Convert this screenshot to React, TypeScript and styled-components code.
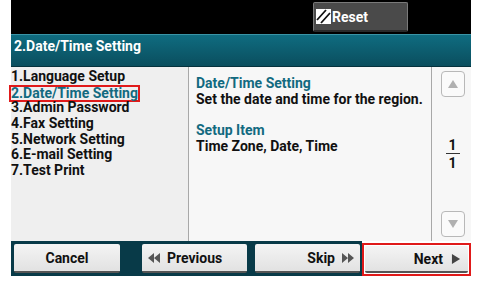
import React from "react";
import styled, { createGlobalStyle } from "styled-components";

const GlobalStyle = createGlobalStyle`
  body {
    margin: 0;
    background: #ffffff;
    font-family: Roboto, "Liberation Sans", sans-serif;
  }
`;

const menuItems = [
  "1.Language Setup",
  "2.Date/Time Setting",
  "3.Admin Password",
  "4.Fax Setting",
  "5.Network Setting",
  "6.E-mail Setting",
  "7.Test Print",
];

export default function App() {
  return (
    <>
      <GlobalStyle />
      <Screen>
        <TopBar>
          <ResetButton>
            <ResetIcon viewBox="0 0 15 15">
              <rect x="0" y="0" width="15" height="15" fill="#fff" />
              <path d="M1 11 L10 1 M5 14 L14 4" stroke="#111" strokeWidth="1.8" />
            </ResetIcon>
            Reset
          </ResetButton>
        </TopBar>
        <Header>2.Date/Time Setting</Header>
        <Content>
          <MenuList>
            {menuItems.map((item, i) => (
              <MenuItem key={item} $active={i === 1}>
                {item}
              </MenuItem>
            ))}
          </MenuList>
          <Detail>
            <Heading>Date/Time Setting</Heading>
            <Body>Set the date and time for the region.</Body>
            <Heading $gap>Setup Item</Heading>
            <Body>Time Zone, Date, Time</Body>
          </Detail>
          <Scroller>
            <ScrollButton>
              <Arrow viewBox="0 0 10 8">
                <path d="M5 0 L10 8 L0 8 Z" fill="#b0b0b0" />
              </Arrow>
            </ScrollButton>
            <Pages>
              <span>1</span>
              <PageLine />
              <span>1</span>
            </Pages>
            <ScrollButton>
              <Arrow viewBox="0 0 10 8">
                <path d="M0 0 L10 0 L5 8 Z" fill="#b0b0b0" />
              </Arrow>
            </ScrollButton>
          </Scroller>
        </Content>
        <BottomBar>
          <NavButton $width={106} $align="center">
            Cancel
          </NavButton>
          <NavButton $width={105} $align="flex-start" $gapLeft={22}>
            <Tri viewBox="0 0 12 10">
              <path d="M6 0 L0 5 L6 10 Z M12 0 L6 5 L12 10 Z" fill="#555" />
            </Tri>
            Previous
          </NavButton>
          <NavButton $width={105} $align="flex-end" $gapLeft={8}>
            Skip
            <Tri viewBox="0 0 12 10">
              <path d="M0 0 L6 5 L0 10 Z M6 0 L12 5 L6 10 Z" fill="#555" />
            </Tri>
          </NavButton>
          <NextFrame>
            <NavButton $width={105} $align="flex-end" $full>
              Next
              <Tri viewBox="0 0 9 11">
                <path d="M0 0 L9 5.5 L0 11 Z" fill="#444" />
              </Tri>
            </NavButton>
          </NextFrame>
        </BottomBar>
      </Screen>
    </>
  );
}

const Screen = styled.div`
  width: 460px;
  margin-left: 11px;
  display: flex;
  flex-direction: column;
`;

const TopBar = styled.div`
  height: 34px;
  background: #000;
  display: flex;
  justify-content: flex-end;
  align-items: flex-start;
  padding-right: 63px;
  box-sizing: border-box;
`;

const ResetButton = styled.div`
  margin-top: 2px;
  width: 95px;
  height: 30px;
  box-sizing: border-box;
  background: #4a4a4a;
  border: 1px solid #7a7a7a;
  border-bottom: 2px solid #2a2a2a;
  border-radius: 2px;
  display: flex;
  align-items: center;
  padding-left: 2px;
  gap: 1px;
  color: #fff;
  font-weight: 700;
  font-size: 14px;
`;

const ResetIcon = styled.svg`
  width: 15px;
  height: 15px;
`;

const Header = styled.div`
  height: 33px;
  box-sizing: border-box;
  background: linear-gradient(#0f6c80, #0a4e5e);
  border-top: 1px solid #3a94a6;
  border-bottom: 1px solid #05323d;
  color: #fff;
  font-weight: 700;
  font-size: 14px;
  padding: 3px 0 0 3px;
`;

const Content = styled.div`
  height: 174px;
  display: flex;
`;

const MenuList = styled.div`
  width: 178px;
  background: #efefef;
  border-right: 1px solid #a8a8a8;
  padding-top: 2px;
  box-sizing: border-box;
`;

const MenuItem = styled.div<{ $active?: boolean }>`
  font-size: 14px;
  font-weight: 700;
  line-height: 15.7px;
  height: 15.7px;
  color: ${({ $active }) => ($active ? "#126a80" : "#111")};
  width: fit-content;
  margin-left: ${({ $active }) => ($active ? "-2px" : "0")};
  padding: 0 ${({ $active }) => ($active ? "2px" : "0")};
  box-shadow: ${({ $active }) => ($active ? "0 0 0 2px #e01a1a inset" : "none")};
  ${({ $active }) => ($active ? "padding-top: 1px; height: 17px; margin: 0 0 -1.3px -2px; box-sizing: border-box; line-height: 15px;" : "")}
`;

const Detail = styled.div`
  width: 243px;
  background: #f7f7f7;
  border-right: 1px solid #a8a8a8;
  box-sizing: border-box;
  padding: 8px 0 0 7px;
`;

const Heading = styled.div<{ $gap?: boolean }>`
  color: #126a80;
  font-size: 14px;
  font-weight: 700;
  line-height: 16px;
  margin-top: ${({ $gap }) => ($gap ? "15px" : "0")};
`;

const Body = styled.div`
  color: #111;
  font-size: 14px;
  font-weight: 700;
  line-height: 16px;
`;

const Scroller = styled.div`
  flex: 1;
  background: #f7f7f7;
  display: flex;
  flex-direction: column;
  align-items: center;
  justify-content: space-between;
  padding: 4px 0 4px 0;
`;

const ScrollButton = styled.div`
  width: 24px;
  height: 26px;
  box-sizing: border-box;
  border: 1px solid #b8b8b8;
  border-radius: 4px;
  background: #fafafa;
  display: flex;
  align-items: center;
  justify-content: center;
  margin-left: 2px;
`;

const Arrow = styled.svg`
  width: 10px;
  height: 8px;
`;

const Pages = styled.div`
  display: flex;
  flex-direction: column;
  align-items: center;
  font-size: 14px;
  font-weight: 700;
  line-height: 14px;
  color: #111;
  margin-left: 2px;
`;

const PageLine = styled.div`
  width: 14px;
  height: 1px;
  background: #333;
  margin: 1px 0 2px;
`;

const BottomBar = styled.div`
  height: 35px;
  display: flex;
  align-items: center;
  padding-left: 3px;
  background: linear-gradient(to right, #083a48 351px, #fff 351px);
`;

const NavButton = styled.div<{
  $width: number;
  $align: string;
  $gapLeft?: number;
  $full?: boolean;
}>`
  width: ${({ $width, $full }) => ($full ? "100%" : `${$width}px`)};
  height: ${({ $full }) => ($full ? "100%" : "29px")};
  margin-left: ${({ $gapLeft }) => $gapLeft || 0}px;
  box-sizing: border-box;
  background: linear-gradient(#f4f4f4, #e2e2e2);
  border-radius: 2px;
  border-bottom: 2px solid #555;
  display: flex;
  align-items: center;
  justify-content: ${({ $align }) => $align};
  gap: 7px;
  padding: 0 6px;
  font-size: 14px;
  font-weight: 700;
  color: #111;
`;

const NextFrame = styled.div`
  margin-left: 2px;
  width: 109px;
  height: 33px;
  box-sizing: border-box;
  border: 2px solid #e01a1a;
  padding: 1px;
  background: #fff;
  align-self: flex-end;
`;

const Tri = styled.svg`
  width: 12px;
  height: 10px;
`;
